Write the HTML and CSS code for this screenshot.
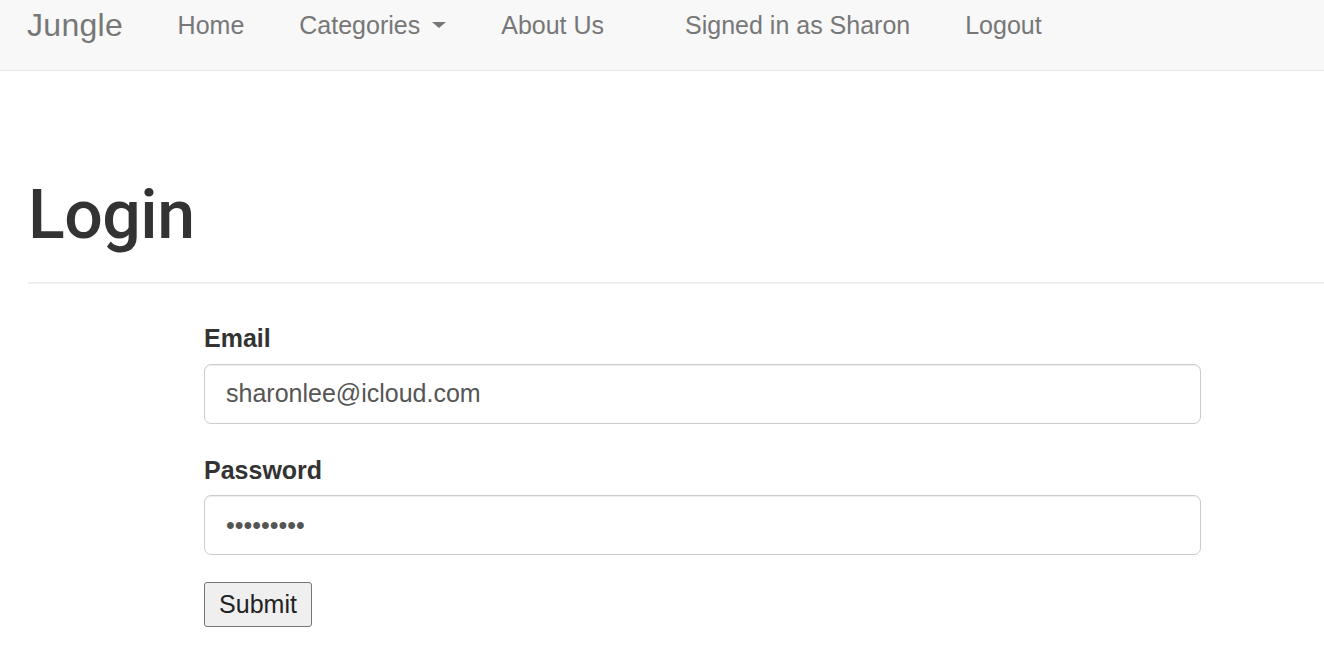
FILE: index.html
```html
<!DOCTYPE html>
<html lang="en">
<head>
<meta charset="utf-8">
<title>Jungle - Login</title>
<link rel="stylesheet" href="styles.css">
</head>
<body>
<nav class="navbar">
  <a class="brand" href="#">Jungle</a>
  <ul class="nav">
    <li><a href="#">Home</a></li>
    <li><a href="#">Categories<span class="caret"></span></a></li>
    <li><a href="#">About Us</a></li>
  </ul>
  <ul class="nav nav-right">
    <li><a href="#">Signed in as Sharon</a></li>
    <li><a href="#">Logout</a></li>
  </ul>
</nav>
<main class="container">
  <div class="page-header">
    <h1>Login</h1>
  </div>
  <form class="login-form">
    <div class="form-group">
      <label for="email">Email</label>
      <input id="email" class="form-control" type="email" value="sharonlee@icloud.com">
    </div>
    <div class="form-group">
      <label for="password">Password</label>
      <input id="password" class="form-control" type="password" value="sharonlee">
    </div>
    <button type="submit" class="submit">Submit</button>
  </form>
</main>
</body>
</html>
```

FILE: styles.css
```css
* { box-sizing: border-box; }

html, body {
  margin: 0;
  padding: 0;
  background: #ffffff;
}

body {
  font-family: "Liberation Sans", Arial, sans-serif;
  font-size: 25px;
  color: #333333;
}

a { text-decoration: none; }

.navbar {
  display: flex;
  align-items: flex-start;
  height: 71px;
  padding: 8px 0 0 27px;
  background: #f8f8f8;
  border-bottom: 1px solid #e7e7e7;
}

.brand {
  font-size: 32px;
  line-height: 34px;
  color: #777777;
  margin-right: 27px;
  letter-spacing: 0.3px;
}

.nav {
  display: flex;
  align-items: flex-start;
  list-style: none;
  margin: 0;
  padding: 0;
}

.nav a {
  display: block;
  padding: 0 27.5px;
  line-height: 34px;
  font-size: 25px;
  color: #777777;
}

.nav-right {
  margin-left: 26px;
}

.caret {
  display: inline-block;
  width: 0;
  height: 0;
  margin-left: 12px;
  vertical-align: 6px;
  border-top: 6px solid #777777;
  border-left: 7px solid transparent;
  border-right: 7px solid transparent;
}

.container {
  padding-left: 28px;
}

.page-header {
  margin-top: 107px;
  border-bottom: 2px solid #eeeeee;
  padding-bottom: 29px;
}

.page-header h1 {
  margin: 0;
  font-family: Roboto, "Liberation Sans", sans-serif;
  font-weight: 500;
  font-size: 68px;
  line-height: 75px;
  color: #333333;
  letter-spacing: -0.5px;
}

.login-form {
  margin-left: 176px;
  width: 997px;
  padding-top: 37px;
}

.form-group {
  margin-bottom: 29px;
}

.form-group label {
  display: block;
  font-weight: bold;
  line-height: 34px;
  margin-bottom: 8.5px;
  color: #333333;
}

.form-control {
  display: block;
  width: 100%;
  height: 60px;
  padding: 0 21px;
  font-family: "Liberation Sans", Arial, sans-serif;
  font-size: 25px;
  color: #555555;
  background: #ffffff;
  border: 1px solid #cccccc;
  border-radius: 7px;
  box-shadow: inset 0 1px 1px rgba(0, 0, 0, 0.075);
  outline: none;
}

.submit {
  display: block;
  height: 45px;
  width: 108px;
  padding: 0;
  margin-top: -2px;
  font-family: "Liberation Sans", Arial, sans-serif;
  font-size: 25px;
  color: #222222;
  background: #efefef;
  border: 1px solid #767676;
  border-radius: 3px;
}
```
